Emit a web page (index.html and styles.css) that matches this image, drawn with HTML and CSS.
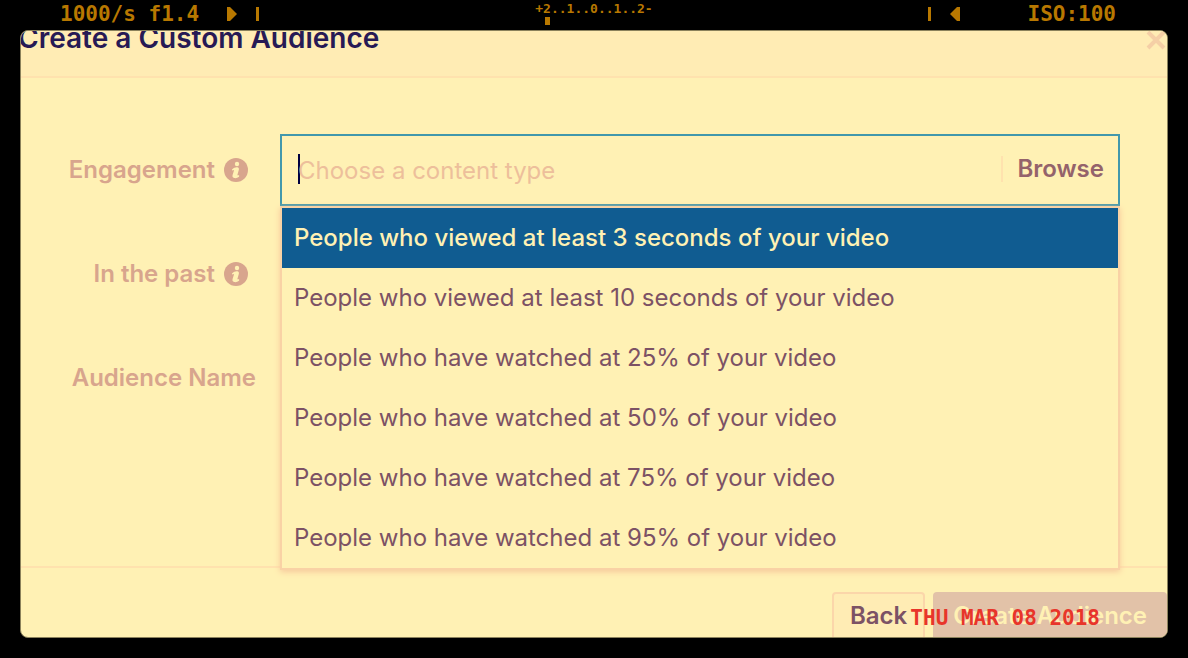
FILE: index.html
```html
<!DOCTYPE html>
<html lang="en">
<head>
<meta charset="utf-8">
<meta name="viewport" content="width=device-width, initial-scale=1">
<title>Create a Custom Audience</title>
<link rel="stylesheet" href="styles.css">
</head>
<body>
<div class="camera">
  <header class="readout">
    <div class="readout-side">
      <span class="shutter">1000/s f1.4</span>
      <svg class="arrow" viewBox="0 0 10 14" aria-hidden="true"><path d="M0 0h3l2 2 2 2 2 2 1 1-1 1-2 2-2 2-2 2H0z"/></svg>
      <span class="tick"></span>
    </div>
    <div class="meter"><span>+2..1..0..1..2-</span><span class="meter-mark"></span></div>
    <div class="readout-side readout-right">
      <span class="tick"></span>
      <svg class="arrow" viewBox="0 0 10 14" aria-hidden="true"><path d="M10 0H7L5 2 3 4 1 6 0 7l1 1 2 2 2 2 2 2h3z"/></svg>
      <span class="iso">ISO:100</span>
    </div>
  </header>

  <main class="dialog">
    <div class="dialog-head">
      <h1 class="title">Create a Custom Audience</h1>
      <button class="close" type="button" aria-label="Close">
        <svg viewBox="0 0 20 20" aria-hidden="true"><path d="M2 1l16 16M18 1L2 17"/></svg>
      </button>
    </div>

    <form class="form">
      <div class="row">
        <div class="label-cell">
          <label for="engagement">Engagement</label>
          <svg class="info" viewBox="0 0 24 24" aria-hidden="true"><circle class="info-disc" cx="12" cy="12" r="12"/><circle class="info-mark" cx="13" cy="6" r="2.2"/><path class="info-mark" d="M8 11.5c1.700-1.700 3.500-2.500 5.200-2.300 1.600.2 2 1.300 1.600 2.900l-1.300 4.500c-.3 1 .4 1 1.600.4v1.800c-1.700 1.300-3.300 1.700-4.900 1.300-1.600-.4-2-1.500-1.600-3l1.300-4.300c.2-1-.5-1-1.900-.2z"/></svg>
        </div>
        <div class="combo">
          <div class="combo-box">
            <span class="caret"></span>
            <input class="combo-input" id="engagement" type="text" placeholder="Choose a content type">
            <button class="browse" type="button">Browse</button>
          </div>
          <ul class="menu" role="listbox" aria-label="Engagement">
            <li class="option selected" role="option" aria-selected="true">People who viewed at least 3 seconds of your video</li>
            <li class="option" role="option">People who viewed at least 10 seconds of your video</li>
            <li class="option" role="option">People who have watched at 25% of your video</li>
            <li class="option" role="option">People who have watched at 50% of your video</li>
            <li class="option" role="option">People who have watched at 75% of your video</li>
            <li class="option" role="option">People who have watched at 95% of your video</li>
          </ul>
        </div>
      </div>
      <div class="row">
        <div class="label-cell">
          <span>In the past</span>
          <svg class="info" viewBox="0 0 24 24" aria-hidden="true"><circle class="info-disc" cx="12" cy="12" r="12"/><circle class="info-mark" cx="13" cy="6" r="2.2"/><path class="info-mark" d="M8 11.5c1.700-1.700 3.500-2.500 5.200-2.300 1.600.2 2 1.300 1.600 2.900l-1.300 4.500c-.3 1 .4 1 1.600.4v1.800c-1.700 1.300-3.300 1.700-4.900 1.300-1.600-.4-2-1.500-1.600-3l1.300-4.300c.2-1-.5-1-1.900-.2z"/></svg>
        </div>
      </div>
      <div class="row">
        <div class="label-cell label-plain"><span>Audience Name</span></div>
      </div>
    </form>

    <footer class="actions">
      <button class="button back" type="button">Back</button>
      <button class="button create" type="button">Create Audience</button>
    </footer>
  </main>

  <time class="stamp" datetime="2018-03-08">THU MAR 08 2018</time>
</div>
</body>
</html>
```
FILE: styles.css
```css
* {
  box-sizing: border-box;
}

body {
  margin: 0;
  background: #000;
  font-family: Inter, "Liberation Sans", sans-serif;
  font-size: 24px;
  line-height: 32px;
}

button,
input {
  font: inherit;
  border: 0;
  padding: 0;
  margin: 0;
  background: none;
}

.camera {
  position: relative;
  display: flex;
  flex-direction: column;
  height: 100vh;
  padding: 0 20px 20px;
  overflow: hidden;
}

/* viewfinder readout */
.readout {
  display: grid;
  grid-template-columns: 1fr auto 1fr;
  flex: none;
  height: 30px;
  padding: 0 40px;
  color: #b87800;
  font: bold 21px/28px "DejaVu Sans Mono", monospace;
}

.readout-side {
  display: flex;
  align-items: center;
  height: 28px;
}

.readout-right {
  justify-content: flex-end;
  padding-right: 12px;
}

.arrow {
  width: 10px;
  height: 14px;
  margin: 0 19px 0 28px;
  fill: currentColor;
}

.readout-right .arrow {
  margin: 0 67px 0 19px;
}

.tick {
  width: 3px;
  height: 14px;
  background: currentColor;
}

.meter {
  display: flex;
  flex-direction: column;
  padding-top: 1px;
  font-size: 13px;
  line-height: 16px;
}

.meter-mark {
  width: 5px;
  height: 8px;
  margin-left: 10px;
  background: currentColor;
}

/* dialog */
.dialog {
  display: flex;
  flex-direction: column;
  flex: 1;
  min-height: 0;
  overflow: hidden;
  border: 1px solid #8b825c;
  border-radius: 8px;
  background: #fff1b4;
}

.dialog-head {
  display: flex;
  justify-content: space-between;
  flex: none;
  height: 47px;
  border-bottom: 2px solid #ffe2ae;
  background: #ffecb4;
}

.title {
  margin: -9px 0 0 -3px;
  color: #271a55;
  font-size: 28px;
  font-weight: 600;
  line-height: 32px;
}

.close {
  height: 20px;
  width: 20px;
  margin-right: 1px;
}

.close svg {
  display: block;
  width: 20px;
  height: 20px;
  fill: none;
  stroke: #f5cfa6;
  stroke-width: 4;
}

.form {
  display: flex;
  flex-direction: column;
  gap: 32px;
  flex: 1;
  padding: 56px 47px 0 0;
}

.row {
  display: grid;
  grid-template-columns: 259px 1fr;
  min-height: 72px;
}

.label-cell {
  display: flex;
  align-items: center;
  justify-content: flex-end;
  gap: 9px;
  padding-right: 32px;
  color: #d8a58d;
  font-weight: 600;
}

.label-plain {
  padding-right: 24px;
}

.info {
  width: 24px;
  height: 24px;
}

.info-disc {
  fill: #d8a58d;
}

.info-mark {
  fill: #fff1b4;
}

.combo {
  position: relative;
}

.combo-box {
  display: flex;
  align-items: center;
  height: 72px;
  padding: 0 14px 2px 16px;
  border: 2px solid #4298ac;
}

.caret {
  width: 2px;
  height: 30px;
  margin-right: -2px;
  background: #000040;
}

.combo-input {
  flex: 1;
  min-width: 0;
  height: 34px;
  padding-top: 2px;
  outline: 0;
  color: #7c5265;
}

.combo-input::placeholder {
  color: #edbf9b;
  opacity: 1;
}

.browse {
  height: 26px;
  padding-left: 14px;
  border-left: 2px solid #ffe2ae;
  color: #94636b;
  font-weight: 600;
  line-height: 24px;
}

.menu {
  position: absolute;
  z-index: 1;
  top: 100%;
  left: 0;
  right: 0;
  margin: 0;
  padding: 0;
  list-style: none;
  border: 2px solid #f9d2a5;
  background: #fff1b4;
  box-shadow: 0 2px 6px #f7c99c;
}

.option {
  height: 60px;
  padding: 0 12px;
  color: #7c5265;
  line-height: 60px;
  white-space: nowrap;
}

.selected {
  background: #105c91;
  color: #fff1b4;
  font-weight: 500;
}

.actions {
  display: flex;
  justify-content: flex-end;
  gap: 8px;
  flex: none;
  height: 71px;
  padding-top: 24px;
  border-top: 2px solid #ffe2ae;
}

.button {
  height: 48px;
  border-radius: 4px;
  font-weight: 600;
  line-height: 44px;
}

.back {
  padding: 0 16px;
  border: 2px solid #fbd6aa;
  background: #ffecb4;
  color: #7c5265;
}

.create {
  padding: 0 20px;
  border-bottom-right-radius: 0;
  background: #e2c2a8;
  color: #fff1b4;
}

/* date imprint */
.stamp {
  position: absolute;
  right: 88px;
  bottom: 26px;
  color: #e8352a;
  font: bold 21px/28px "DejaVu Sans Mono", monospace;
}
```
